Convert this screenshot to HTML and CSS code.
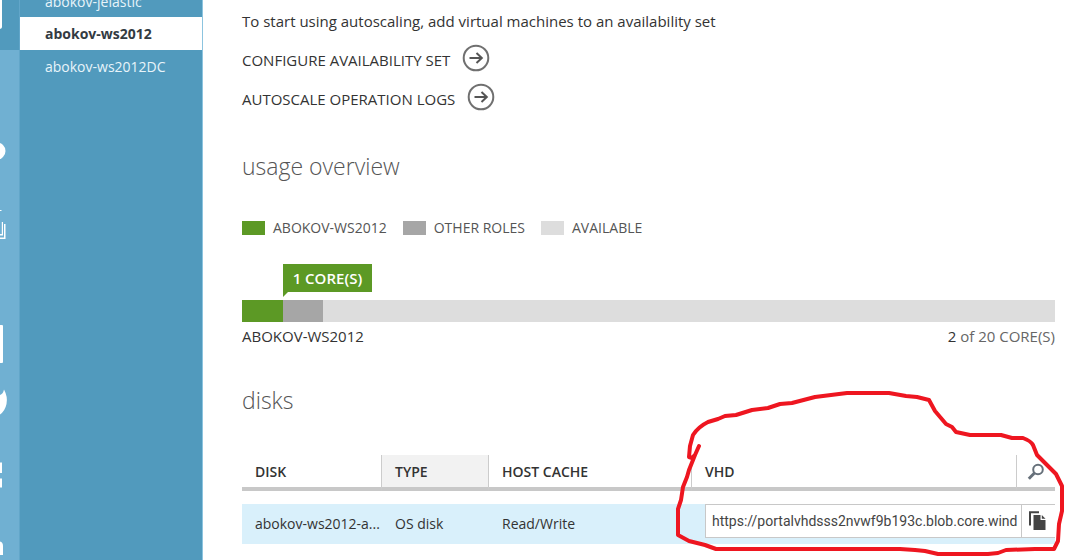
FILE: index.html
```html
<!DOCTYPE html>
<html lang="en">
<head>
<meta charset="utf-8">
<title>abokov-ws2012 dashboard</title>
<link rel="stylesheet" href="styles.css">
</head>
<body>
<div class="portal">
  <nav class="rail" aria-label="Services">
    <a class="rail-item rail-active" href="#" aria-label="Virtual machines"><svg width="20" height="50" viewBox="0 0 20 50"><path d="M0 0H2V27Q2 28.500 0 29Z"/></svg></a>
    <a class="rail-item" href="#" aria-label="Mobile services"><svg width="20" height="72" viewBox="0 0 20 72"></svg></a>
    <a class="rail-item" href="#" aria-label="Cloud services"><svg width="20" height="74" viewBox="0 0 20 74"><circle cx="-3" cy="29" r="8.500"/></svg></a>
    <a class="rail-item" href="#" aria-label="SQL databases"><svg width="20" height="104" viewBox="0 0 20 104"><path d="M0 14H1.500V15H0zM0 43H5.500V28H4V41.500H0zM0 39.500H3V26H1.800V38H0z"/></svg></a>
    <a class="rail-item" href="#" aria-label="Storage"><svg width="20" height="80" viewBox="0 0 20 80"><path d="M0 25H2Q3 25 3 26V62Q3 63 2 63H0z"/></svg></a>
    <a class="rail-item" href="#" aria-label="Hadoop"><svg width="20" height="74" viewBox="0 0 20 74"><path d="M0 15Q3 14 4 9.500Q8 17 6.500 24Q5 31 0 34.500z"/></svg></a>
    <a class="rail-item" href="#" aria-label="Media services"><svg width="20" height="74" viewBox="0 0 20 74"><path d="M0 8.500H2V19H0zM0 24.500H2V33.500H0z"/></svg></a>
    <a class="rail-item" href="#" aria-label="Networks"><svg width="20" height="74" viewBox="0 0 20 74"><path d="M0 13.500Q3 14 3 18V27H0z"/></svg></a>
  </nav>

  <nav class="instances" aria-label="Virtual machines">
    <a class="instance" href="#">abokov-jelastic</a>
    <a class="instance instance-selected" href="#" aria-current="page">abokov-ws2012</a>
    <a class="instance" href="#">abokov-ws2012DC</a>
  </nav>

  <main class="content">
    <section class="autoscale">
      <p class="hint">To start using autoscaling, add virtual machines to an availability set</p>
      <a class="action" href="#">CONFIGURE AVAILABILITY SET
        <svg class="arrow" viewBox="0 0 28 28"><circle cx="14" cy="14" r="12.300"/><path class="shaft" d="M7.500 14H19.500"/><path class="head" d="M14.500 9L19.800 14L14.500 19"/></svg></a>
      <a class="action" href="#">AUTOSCALE OPERATION LOGS
        <svg class="arrow" viewBox="0 0 28 28"><circle cx="14" cy="14" r="12.300"/><path class="shaft" d="M7.500 14H19.500"/><path class="head" d="M14.500 9L19.800 14L14.500 19"/></svg></a>
    </section>

    <section class="usage">
      <h2>usage overview</h2>
      <ul class="legend">
        <li><span class="swatch current"></span>ABOKOV-WS2012</li>
        <li><span class="swatch other"></span>OTHER ROLES</li>
        <li><span class="swatch available"></span>AVAILABLE</li>
      </ul>
      <div class="meter available">
        <div class="segment current" style="width:5%"><span class="flag">1 CORE(S)</span></div>
        <div class="segment other" style="width:5%"></div>
      </div>
      <div class="meter-caption"><span>ABOKOV-WS2012</span><span class="total"><b>2</b> of 20 CORE(S)</span></div>
    </section>

    <section class="disks">
      <h2>disks</h2>
      <table>
        <colgroup><col class="col-disk"><col class="col-type"><col class="col-cache"><col><col class="col-tool"></colgroup>
        <thead>
          <tr><th>DISK</th><th class="sorted">TYPE</th><th>HOST CACHE</th><th>VHD</th>
          <th class="tool"><button class="search" aria-label="Search"><svg width="18" height="18" viewBox="0 0 18 18"><circle cx="11" cy="6.500" r="4.800"/><path class="handle" d="M7.500 10L1.800 15.700"/></svg></button></th></tr>
        </thead>
        <tbody>
          <tr><td>abokov-ws2012-a...</td><td>OS disk</td><td>Read/Write</td>
          <td class="vhd" colspan="2"><div class="copy-field"><input type="text" aria-label="VHD" readonly value="https://portalvhdsss2nvwf9b193c.blob.core.wind"><button class="copy" aria-label="Copy"><svg width="18" height="20" viewBox="0 0 18 20"><path d="M1 14.500V1.200H10" fill="none" stroke="#444" stroke-width="2"/><path d="M4.500 4H11.500V9H16.500V19H4.500z"/><path d="M12.800 4L16.500 7.700H12.800z"/></svg></button></div></td></tr>
        </tbody>
      </table>
      <svg class="markup" viewBox="0 0 404 180" aria-hidden="true"><path d="M29 67L25 76L22 79L19 78L20 67L23 56Q28 48 38 43L48 40L55 37L66 36L82 31L98 29L110 25L122 24L145 18L177 14H219L236 17L247 18L259 21L265 32L276 45L282 48L286 53L300 56L331 56L342 59L353 59Q361 62 363 66L367 76L376 85L386 95L392 107V132L389 145L388 162L384 170H365L336 171L328 174L318 175H268L255 172L245 171L230 170H46L35 166L19 162L8 156V130L11 121L13 108L17 98L19 91L25 76"/></svg>
    </section>
  </main>
</div>
</body>
</html>
```
FILE: styles.css
```css
* { box-sizing: border-box; }
body { margin: 0; background: #fff; color: #333; font: 14px/20px "Open Sans", "Noto Sans", sans-serif; overflow: hidden; }
a { color: inherit; text-decoration: none; }
button { border: 0; padding: 0; background: none; cursor: pointer; }
svg { display: block; }
.portal { display: flex; height: 100vh; }

.rail { flex: none; width: 20px; overflow: hidden; background: #70b0d2; border-right: 1px solid #62a6c9; }
.rail-item { display: block; fill: #fff; }
.rail-active { background: #519abd; }

.instances { flex: none; width: 183px; background: #519abd; border-right: 1px solid #8cc4df; overflow: hidden; }
.instance { display: block; height: 33px; padding: 7px 25px; color: #e8f4fa; }
.instance:first-child { height: 17px; padding-top: 0; line-height: 4px; }
.instance-selected { background: #fff; color: #333b42; font-weight: 700; }

.content { flex: 1; min-width: 0; padding: 11px 19px 0 39px; }
.hint { margin: 0 0 13px; font-size: 15px; }
.action { display: flex; gap: 12px; height: 28px; margin-bottom: 11px; padding-top: 6px; width: max-content; font-size: 15px; }
.arrow { width: 28px; height: 28px; margin-top: -6px; fill: none; stroke: #707070; stroke-width: 2; }
.shaft, .head { stroke: #555; stroke-width: 2; }

h2 { margin: 0; color: #555; font-size: 23px; line-height: 32px; font-weight: 300; }
.usage { padding-top: 28px; }
.legend { display: flex; gap: 16px; margin: 36px 0 0; padding: 0; list-style: none; color: #555; }
.legend li { display: flex; align-items: center; gap: 8px; }
.swatch { width: 23px; height: 14px; }
.current { background: #5c9925; }
.other { background: #a6a6a6; }
.available { background: #ddd; }
.meter { display: flex; height: 22px; margin-top: 62px; }
.segment { position: relative; }
.flag { position: absolute; left: 100%; bottom: 30px; padding: 4px 10px; background: #5c9925; color: #fff; font-size: 15px; font-weight: 600; white-space: nowrap; }
.flag::after { content: ""; position: absolute; left: 0; top: 100%; border-top: 5px solid #5c9925; border-right: 5px solid transparent; }
.meter-caption { display: flex; justify-content: space-between; margin-top: 4px; font-size: 15px; }
.total { color: #666; }
.total b { color: #333; font-weight: 400; }

.disks { position: relative; padding-top: 38px; }
table { width: 100%; margin-top: 39px; border-collapse: separate; border-spacing: 0; table-layout: fixed; }
.col-disk { width: 140px; }
.col-type { width: 107px; }
.col-cache { width: 203px; }
.col-tool { width: 38px; }
th, td { padding: 0 0 0 13px; text-align: left; white-space: nowrap; }
th { height: 36px; padding-top: 2px; border-right: 1px solid #ccc; border-bottom: 4px solid #c8c8c8; font-weight: 600; }
th.tool { padding-left: 10px; border-right: 0; }
.sorted { background: #f2f2f2; }
tbody::before { content: ""; display: block; height: 13px; }
td { height: 40px; background: #d9f0fb; }
td.vhd { padding-bottom: 6px; }
.search { display: block; }
.search svg { fill: none; stroke: #66707a; stroke-width: 2; }
.search .handle { stroke-width: 3; }
.copy-field { display: flex; height: 34px; border: 1px solid #c8c8c8; border-right: 0; background: #fff; }
.copy-field input { flex: 1; min-width: 0; border: 0; outline: 0; padding: 0 0 0 6px; background: none; color: #444; font: 14px/20px Roboto, "Open Sans", sans-serif; }
.copy { flex: none; width: 34px; padding-left: 7px; border-left: 1px solid #c8c8c8; fill: #444; }
.markup { position: absolute; top: 33px; right: -19px; width: 404px; height: 180px; fill: none; stroke: #ee1620; stroke-width: 4; stroke-linejoin: round; stroke-linecap: round; pointer-events: none; }
```
